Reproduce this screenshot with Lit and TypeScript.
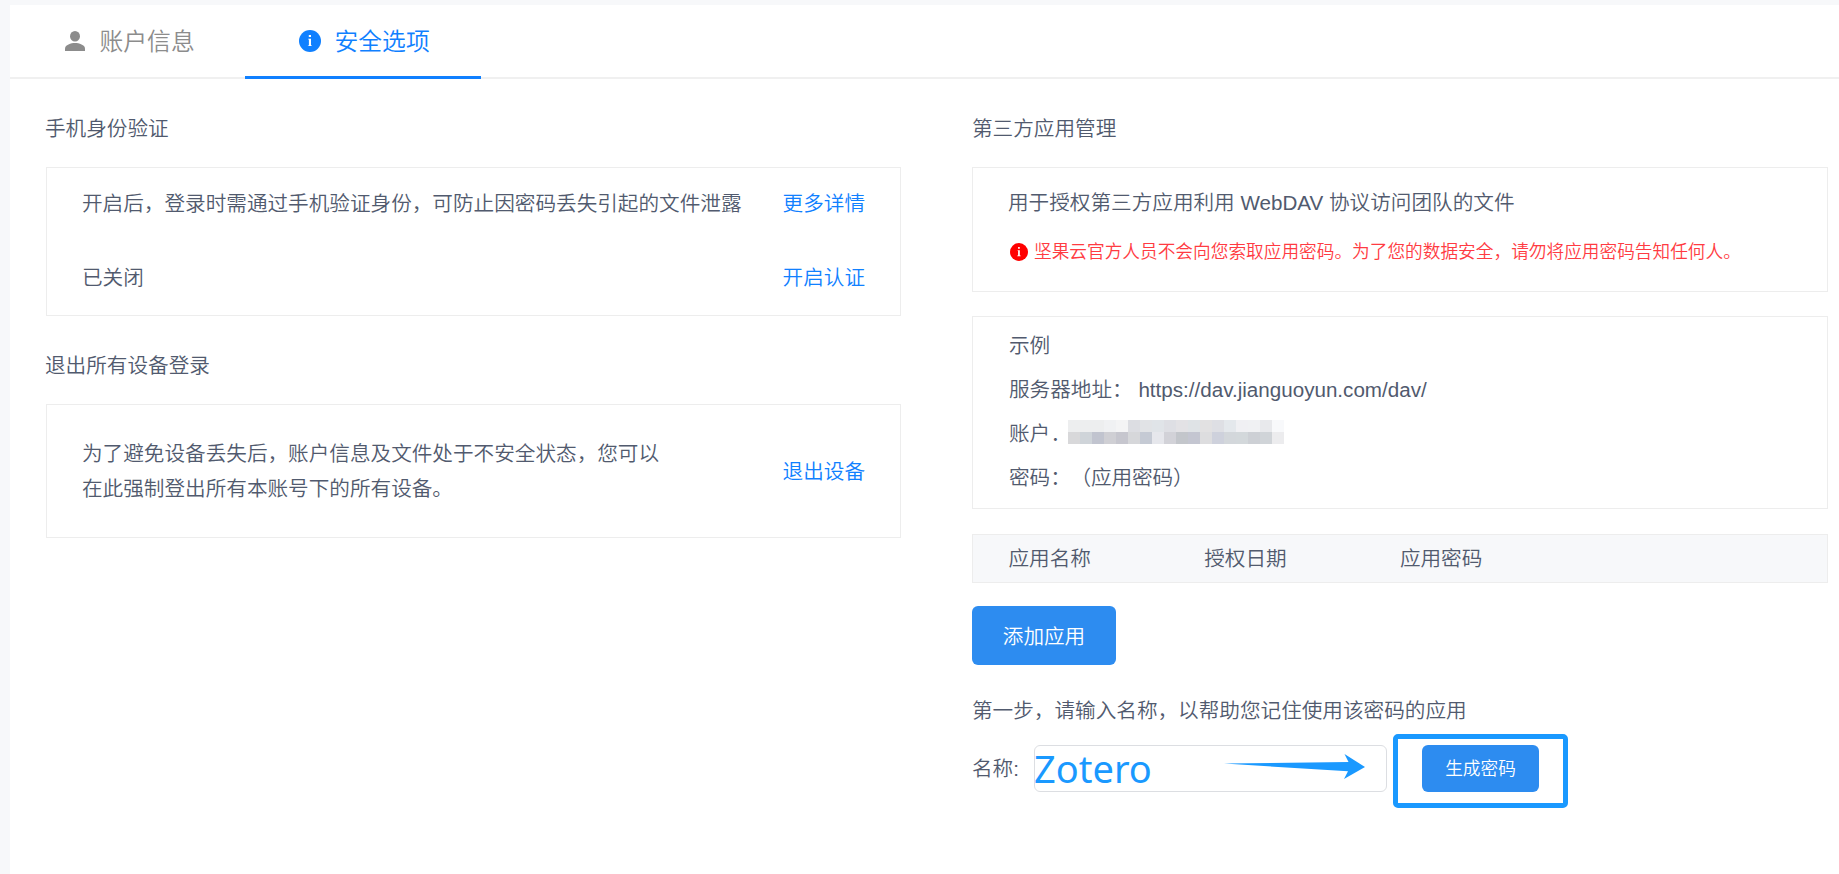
import { LitElement, html, css } from "lit";
import { customElement } from "lit/decorators.js";

const infoIcon = (cls: string) => html`<svg class=${cls} viewBox="0 0 22 22">
  <circle cx="11" cy="11" r="11" fill="currentColor" />
  <rect x="9.8" y="5" width="2.2" height="2" fill="#fff" />
  <path d="M9.200 8.800h2.800v6.600h1v.7H8.900v-.7h1V9.500h-.7z" fill="#fff" />
</svg>`;

// Two rows of 12px blocks that hide the account name.
const MASK = [
  ["#edeeef", "#edeeef", "#edeeef", "#f0f1f3", "#f4f4f5", "#dcdde2", "#e1e3e6", "#e0e4e8", "#dedfe4", "#e3e2e5", "#dfe3e6", "#e2e1e2", "#dedfe4", "#e4e8ec", "#f0f0f3", "#f0f1f3", "#e8e9ec", "#f8f9fb"],
  ["#d8d8da", "#cfd4d9", "#c1c4cf", "#cfcfd4", "#c6c6ce", "#d6d7da", "#c5cad4", "#e6e7ec", "#d2d2d8", "#c3c6cb", "#c4c6d1", "#dddddf", "#ced1dc", "#d3d7db", "#d3d8db", "#cdd0d5", "#d0d4d8", "#ececee"],
];

@customElement("app-root")
export class AppRoot extends LitElement {
  static styles = css`
    :host {
      display: block;
      box-sizing: border-box;
      height: 874px;
      overflow: hidden;
      padding: 5px 0 0 10px;
      background: #f7f8fa;
      color: #515a6e;
      font-family: "Liberation Sans", "Noto Sans CJK SC", sans-serif;
      font-size: 20.625px;
      font-weight: 350;
    }
    * { box-sizing: border-box; }
    .panel { height: 100%; background: #fff; }
    .tabs { display: flex; height: 74px; border-bottom: 2px solid #f0f0f0; }
    .tab {
      display: flex;
      align-items: center;
      width: 235px;
      height: 74px;
      padding: 0 0 3px 54px;
      font-size: 23.8px;
      color: #8c8c8c;
      white-space: nowrap;
    }
    .tab.active { width: 236px; color: #1080ff; border-bottom: 3px solid #1080ff; padding-bottom: 0; }
    .tab span { padding-bottom: 2px; }
    .user, .info { width: 22px; height: 22px; margin-right: 13.500px; }
    .columns { display: flex; gap: 71px; padding: 29px 11px 0 35px; }
    .col { width: 856px; flex: none; }
    .title { height: 42px; line-height: 42px; margin-bottom: 17px; }
    .card { border: 1px solid #ededed; padding: 0 35px; margin-bottom: 24px; }
    .link { color: #1080ff; white-space: nowrap; }
    .left .card { margin-left: 1px; }
    .phone { height: 149px; padding-top: 16px; margin-bottom: 29px; }
    .row { display: flex; justify-content: space-between; line-height: 40px; height: 74px; }
    .logout { height: 134px; display: flex; align-items: center; justify-content: space-between; padding-bottom: 3px; }
    .logout .desc { width: 590px; line-height: 35px; padding-top: 3px; }
    .dav { height: 125px; padding: 15px 35px 0; margin-bottom: 24px; }
    .dav .line { line-height: 40px; }
    .warn { display: flex; align-items: center; height: 36px; margin-top: 9px; color: #ff3b42; font-size: 17.68px; white-space: nowrap; }
    .warn-icon { width: 18px; height: 18px; margin: 4px 6px 0 2px; color: #f00; }
    .sample { height: 193px; padding: 7px 35px 0 36px; margin-bottom: 25px; }
    .sample .line { display: flex; line-height: 44px; height: 44px; white-space: pre; }
    .account { position: relative; width: 62px; }
    .mask { position: absolute; left: 59px; top: 8px; z-index: 1; display: grid; grid-template-columns: repeat(18, 12px); grid-auto-rows: 12px; }
    .fade { position: absolute; left: 43px; top: 8px; width: 16px; height: 15px; background: #fff; }
    .hint { margin-left: -6px; letter-spacing: -0.1px; }
    .thead { display: flex; height: 49px; line-height: 48px; margin-bottom: 23px; padding: 0 35.500px; background: #f7f8fa; border: 1px solid #ededed; }
    .thead span { width: 195.700px; }
    .btn { display: flex; align-items: center; justify-content: center; border: 0; background: #2d8cf0; color: #fff; font: inherit; border-radius: 6px; padding: 0 0 2px 0; }
    .add { width: 144px; height: 59px; margin-bottom: 26px; }
    .step { line-height: 40px; height: 40px; }
    .form { display: flex; align-items: center; height: 47px; margin-top: 14px; position: relative; }
    .label { width: 62px; padding-bottom: 3px; }
    .field { width: 353px; height: 47px; border: 1px solid #dcdee2; border-radius: 6px; background: #fff; }
    .gen { width: 117px; height: 47px; margin-left: 35px; font-size: 17.68px; padding-bottom: 3px; }
    .note { position: absolute; left: 62px; top: -4px; font: 400 38px/54px "Noto Sans", sans-serif; color: #1a99ff; }
    .arrow { position: absolute; left: 252px; top: 9px; width: 142px; height: 26px; }
    .frame { position: absolute; left: 420.500px; top: -11px; width: 175.500px; height: 74px; border: 5px solid #1a99ff; border-radius: 5px; }
  `;

  render() {
    return html`<div class="panel">
      <nav class="tabs">
        <div class="tab">
          <svg class="user" viewBox="0 0 22 22">
            <ellipse cx="11" cy="6.200" rx="5" ry="5.200" fill="currentColor" />
            <path d="M1 21v-2.600c0-3.500 6-5.400 10-5.400s10 1.900 10 5.400V21z" fill="currentColor" />
          </svg>
          <span>账户信息</span>
        </div>
        <div class="tab active">${infoIcon("info")}<span>安全选项</span></div>
      </nav>
      <main class="columns">
        <section class="col left">
          <div class="title">手机身份验证</div>
          <div class="card phone">
            <div class="row">
              <span>开启后，登录时需通过手机验证身份，可防止因密码丢失引起的文件泄露</span>
              <a class="link">更多详情</a>
            </div>
            <div class="row"><span>已关闭</span><a class="link">开启认证</a></div>
          </div>
          <div class="title">退出所有设备登录</div>
          <div class="card logout">
            <div class="desc">为了避免设备丢失后，账户信息及文件处于不安全状态，您可以<br />在此强制登出所有本账号下的所有设备。</div>
            <a class="link">退出设备</a>
          </div>
        </section>
        <section class="col">
          <div class="title">第三方应用管理</div>
          <div class="card dav">
            <div class="line">用于授权第三方应用利用 WebDAV 协议访问团队的文件</div>
            <div class="warn">${infoIcon("warn-icon")}<span>坚果云官方人员不会向您索取应用密码。为了您的数据安全，请勿将应用密码告知任何人。</span></div>
          </div>
          <div class="card sample">
            <div class="line">示例</div>
            <div class="line">服务器地址： https://dav.jianguoyun.com/dav/</div>
            <div class="line">
              <div class="account">账户：<span class="fade"></span><span class="mask">${MASK.flat().map((c) => html`<i style="background:${c}"></i>`)}</span></div>
            </div>
            <div class="line"><span>密码： </span><span class="hint">（应用密码）</span></div>
          </div>
          <div class="thead"><span>应用名称</span><span>授权日期</span><span>应用密码</span></div>
          <button class="btn add">添加应用</button>
          <div class="step">第一步，请输入名称，以帮助您记住使用该密码的应用</div>
          <div class="form">
            <span class="label">名称:</span>
            <div class="field"></div>
            <button class="btn gen">生成密码</button>
            <span class="note">Zotero</span>
            <svg class="arrow" viewBox="0 0 142 26">
              <path d="M0 9.500L124.500 8L120.500 0L141 13L120 25L124 17.300Z" fill="#1a99ff" />
            </svg>
            <div class="frame"></div>
          </div>
        </section>
      </main>
    </div>`;
  }
}
